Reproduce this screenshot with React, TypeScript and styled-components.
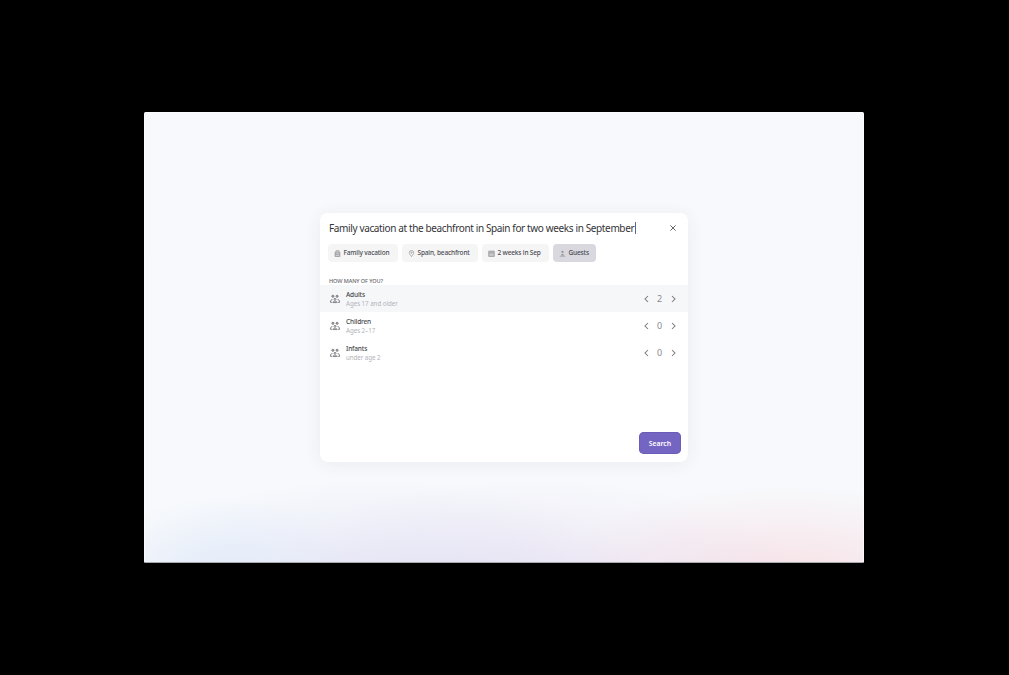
import React from "react";
import styled, { createGlobalStyle } from "styled-components";

const GlobalStyle = createGlobalStyle`
  * { box-sizing: border-box; }
  body { margin: 0; background: #000; font-family: "Noto Sans", "Open Sans", sans-serif; }
  button { font-family: inherit; border: 0; padding: 0; background: none; }
`;

const Stage = styled.main`
  height: 675px;
  padding: 112px 145px 0 144px;
`;

const Screen = styled.section`
  width: 720px;
  height: 451px;
  padding-top: 100px;
  display: flex;
  justify-content: center;
  align-items: flex-start;
  border-radius: 1.5px;
  border: 1px solid rgba(255, 255, 255, 0.6);
  border-bottom-color: #a9a9b0;
  background:
    radial-gradient(ellipse 130px 75px at 11% 102%, rgba(222, 234, 249, 0.65), transparent),
    radial-gradient(ellipse 290px 130px at 32% 110%, rgba(222, 223, 244, 0.85), transparent),
    radial-gradient(ellipse 290px 130px at 54% 110%, rgba(232, 221, 239, 0.85), transparent),
    radial-gradient(ellipse 240px 105px at 89% 106%, rgba(247, 221, 226, 0.95), transparent),
    #f7f9fc;
  background-origin: border-box;
`;

const Dialog = styled.div`
  width: 368px;
  height: 249px;
  display: flex;
  flex-direction: column;
  border-radius: 8px;
  background: #fff;
  box-shadow: 0 2px 18px rgba(50, 55, 65, 0.07);
`;

const QueryBar = styled.header`
  height: 31px;
  padding: 0 10px 0 9px;
  display: flex;
  align-items: center;
  justify-content: space-between;
`;

const Query = styled.div`
  display: flex;
  align-items: center;
  padding-bottom: 2px;
  font-size: 10px;
  line-height: 14px;
  letter-spacing: -0.367px;
  color: #343438;
  white-space: nowrap;
`;

const Caret = styled.i`
  width: 1px;
  height: 12px;
  margin-left: 0.4px;
  background: #665c96;
`;

const CloseButton = styled.button`
  width: 10px;
  height: 10px;
  margin-bottom: 1px;
  display: flex;
  align-items: center;
  justify-content: center;
  color: #65656b;
`;

const Chips = styled.div`
  display: flex;
  gap: 4px;
  padding-left: 8px;
`;

const Chip = styled.button<{ $width: number; $active?: boolean }>`
  width: ${(p) => p.$width}px;
  height: 18px;
  display: flex;
  align-items: center;
  gap: 2.5px;
  padding-left: 6px;
  border-radius: 4px;
  background: ${(p) => (p.$active ? "#d9d8df" : "#f5f5f6")};
  color: #4b4b50;
  font-size: 6.5px;
  font-weight: 500;
  letter-spacing: -0.16px;
  line-height: 10px;
  white-space: nowrap;
  svg { flex: none; color: #929298; }
`;

const Heading = styled.h2`
  margin: 15px 0 0;
  padding-left: 9px;
  height: 8px;
  font-size: 5.5px;
  line-height: 9px;
  font-weight: 500;
  letter-spacing: -0.08px;
  color: #66666b;
  white-space: nowrap;
`;

const Row = styled.div<{ $active?: boolean }>`
  height: 27px;
  padding: 0 10px 0 9px;
  display: flex;
  align-items: center;
  background: ${(p) => (p.$active ? "#f6f7f9" : "transparent")};
`;

const Details = styled.div`
  flex: 1;
  padding-left: 5px;
`;

const Name = styled.div`
  font-size: 6.5px;
  line-height: 9px;
  font-weight: 500;
  letter-spacing: -0.14px;
  color: #46464b;
`;

const Age = styled.div`
  font-size: 6.2px;
  line-height: 9px;
  letter-spacing: -0.04px;
  color: #b3b3b9;
`;

const Counter = styled.div`
  display: flex;
  align-items: center;
  color: #77777d;
`;

const Count = styled.span`
  width: 17px;
  text-align: center;
  font-size: 9px;
  line-height: 12px;
  color: #8a8a90;
`;

const Step = styled.button`
  width: 10px;
  height: 12px;
  display: flex;
  align-items: center;
  justify-content: center;
  color: inherit;
`;

const Footer = styled.footer`
  margin-top: auto;
  display: flex;
  justify-content: flex-end;
  padding: 0 7px 8px 0;
`;

const SearchButton = styled.button`
  width: 42px;
  height: 22px;
  border-radius: 5px;
  background: #7565c2;
  box-shadow: inset 0 0 0 0.5px #6554ae;
  color: #fff;
  font-size: 6.8px;
  font-weight: 600;
`;

const chipArt = {
  trip: (
    <>
      <path d="M1 2.2h5v4.5H1z" fill="currentColor" opacity=".4" />
      <path d="M2 2V.7h3V2M1.3 2.2h4.4v4.3H1.3zM1.3 4.2h4.4" />
    </>
  ),
  place: (
    <>
      <path d="M3.5 6.6C2.5 5 1.3 4 1.3 2.7a2.2 2.2 0 0 1 4.4 0C5.7 4 4.5 5 3.5 6.6Z" />
      <circle cx="3.5" cy="2.7" r=".6" />
    </>
  ),
  dates: (
    <>
      <path d="M.8 1.2h5.4v5.2H.8z" fill="currentColor" opacity=".45" />
      <path d="M.8 1.2h5.4v5.2H.8zM1 2.8h5" />
    </>
  ),
  guest: (
    <>
      <circle cx="3.5" cy="1.9" r="1.1" fill="currentColor" stroke="none" />
      <path d="M2.4 4h2.2v1.5H2.4z" fill="currentColor" stroke="none" />
      <path d="M.8 6.2h5.4" />
    </>
  ),
};

const ChipIcon = ({ kind }: { kind: keyof typeof chipArt }) => (
  <svg width="7" height="7" viewBox="0 0 7 7" fill="none" stroke="currentColor" strokeWidth=".7">
    {chipArt[kind]}
  </svg>
);

const GroupIcon = () => (
  <svg width="12" height="10" viewBox="0 0 12 10" fill="none" stroke="#74747a" strokeWidth=".9">
    <circle cx="3.9" cy="2.3" r="1.05" fill="#a6a6aa" />
    <circle cx="8.1" cy="2.3" r="1.05" fill="#a6a6aa" />
    <path d="M3.4 5.6c-1.3 0-2 .8-2 2.7h2M8.6 5.6c1.3 0 2 .8 2 2.7h-2" />
    <circle cx="6" cy="5.3" r=".95" />
    <path d="M4.2 8.6c0-1 .6-1.4 1.8-1.4s1.8.4 1.8 1.4Z" />
  </svg>
);

const Chevron = ({ next }: { next?: boolean }) => (
  <svg width="5" height="8" viewBox="0 0 5 8" fill="none" stroke="currentColor" strokeWidth="1.05">
    <path d={next ? "M1 1l3 3-3 3" : "M4 1L1 4l3 3"} />
  </svg>
);

const guests = [
  { name: "Adults", age: "Ages 17 and older", count: 2 },
  { name: "Children", age: "Ages 2–17", count: 0 },
  { name: "Infants", age: "under age 2", count: 0 },
];

export default function App() {
  return (
    <>
      <GlobalStyle />
      <Stage>
        <Screen>
          <Dialog role="dialog">
            <QueryBar>
              <Query>
                Family vacation at the beachfront in Spain for two weeks in September
                <Caret />
              </Query>
              <CloseButton aria-label="Close">
                <svg width="6" height="6" viewBox="0 0 6 6" stroke="currentColor" strokeWidth="1">
                  <path d="M.4.4l5.2 5.2M5.6.4L.4 5.6" />
                </svg>
              </CloseButton>
            </QueryBar>
            <Chips>
              <Chip $width={70}><ChipIcon kind="trip" />Family vacation</Chip>
              <Chip $width={76}><ChipIcon kind="place" />Spain, beachfront</Chip>
              <Chip $width={67}><ChipIcon kind="dates" />2 weeks in Sep</Chip>
              <Chip $width={43} $active><ChipIcon kind="guest" />Guests</Chip>
            </Chips>
            <Heading>HOW MANY OF YOU?</Heading>
            {guests.map((g, i) => (
              <Row key={g.name} $active={i === 0}>
                <GroupIcon />
                <Details>
                  <Name>{g.name}</Name>
                  <Age>{g.age}</Age>
                </Details>
                <Counter>
                  <Step aria-label="Fewer"><Chevron /></Step>
                  <Count>{g.count}</Count>
                  <Step aria-label="More"><Chevron next /></Step>
                </Counter>
              </Row>
            ))}
            <Footer><SearchButton>Search</SearchButton></Footer>
          </Dialog>
        </Screen>
      </Stage>
    </>
  );
}
